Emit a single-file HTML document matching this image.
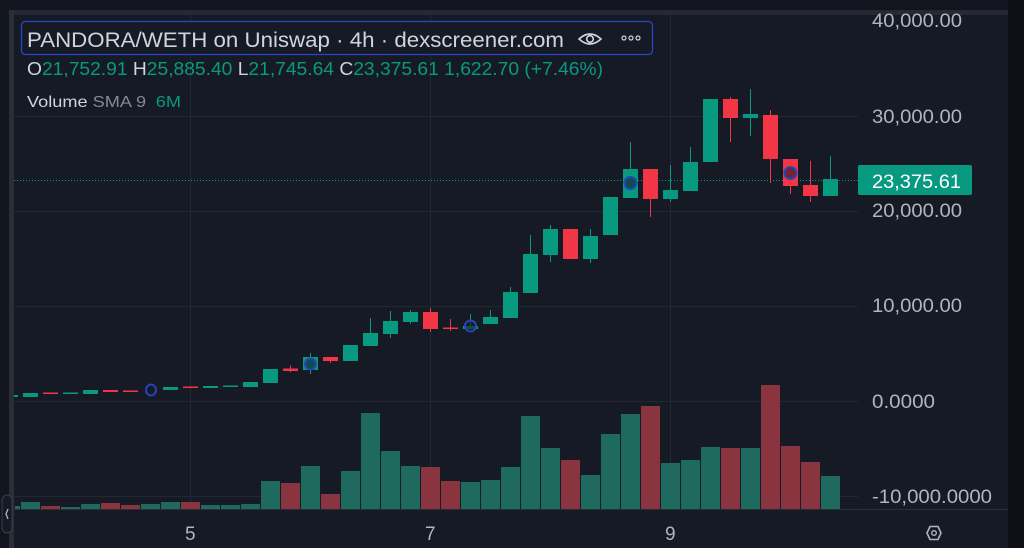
<!DOCTYPE html>
<html><head><meta charset="utf-8"><style>
body{margin:0;background:#161a25;width:1024px;height:548px;overflow:hidden;font-family:"Liberation Sans",sans-serif}
</style></head><body>
<svg width="1024" height="548" xmlns="http://www.w3.org/2000/svg" style="position:absolute;left:0;top:0">
<rect width="1024" height="548" fill="#161a25"/>
<rect x="0" y="0" width="1024" height="10" fill="#12151d"/>
<rect x="14" y="10" width="994" height="5" fill="#252935"/>
<rect x="0" y="0" width="9" height="548" fill="#12151d"/>
<rect x="9" y="10" width="5" height="538" fill="#2a2e39"/>
<rect x="1008" y="0" width="16" height="548" fill="#0e1016"/>
<g stroke="#232733" stroke-width="1">
<line x1="14" y1="116.5" x2="858" y2="116.5"/><line x1="14" y1="211.5" x2="858" y2="211.5"/>
<line x1="14" y1="306.5" x2="858" y2="306.5"/><line x1="14" y1="401.5" x2="858" y2="401.5"/>
<line x1="14" y1="496.5" x2="858" y2="496.5"/>
<line x1="190.5" y1="15" x2="190.5" y2="510"/><line x1="430.5" y1="15" x2="430.5" y2="510"/><line x1="670.5" y1="15" x2="670.5" y2="510"/>
</g>
<line x1="14" y1="509.5" x2="1008" y2="509.5" stroke="#2a2e39"/>
<!-- volume -->
<g fill="#1e6a5e">
<rect x="15" y="506" width="5" height="3"/>
<rect x="21" y="502" width="19" height="7"/><rect x="61" y="507" width="19" height="2"/><rect x="81" y="504" width="19" height="5"/>
<rect x="141" y="504" width="19" height="5"/><rect x="161" y="502" width="19" height="7"/><rect x="201" y="505" width="19" height="4"/>
<rect x="221" y="505" width="19" height="4"/><rect x="241" y="504" width="19" height="5"/><rect x="261" y="481" width="19" height="28"/>
<rect x="301" y="466" width="19" height="43"/><rect x="341" y="471" width="19" height="38"/><rect x="361" y="413" width="19" height="96"/>
<rect x="381" y="451" width="19" height="58"/><rect x="401" y="466" width="19" height="43"/><rect x="461" y="482" width="19" height="27"/>
<rect x="481" y="480" width="19" height="29"/><rect x="501" y="467" width="19" height="42"/><rect x="521" y="416" width="19" height="93"/>
<rect x="541" y="448" width="19" height="61"/><rect x="581" y="475" width="19" height="34"/><rect x="601" y="434" width="19" height="75"/>
<rect x="621" y="414" width="19" height="95"/><rect x="661" y="463" width="19" height="46"/><rect x="681" y="460" width="19" height="49"/>
<rect x="701" y="447" width="19" height="62"/><rect x="741" y="448" width="19" height="61"/><rect x="821" y="476" width="19" height="33"/>
</g>
<g fill="#8a3440">
<rect x="41" y="506" width="19" height="3"/><rect x="101" y="503" width="19" height="6"/><rect x="121" y="505" width="19" height="4"/>
<rect x="181" y="502" width="19" height="7"/><rect x="281" y="483" width="19" height="26"/><rect x="321" y="494" width="19" height="15"/>
<rect x="421" y="467" width="19" height="42"/><rect x="441" y="481" width="19" height="28"/><rect x="561" y="460" width="19" height="49"/>
<rect x="641" y="406" width="19" height="103"/><rect x="721" y="448" width="19" height="61"/><rect x="761" y="385" width="19" height="124"/>
<rect x="781" y="446" width="19" height="63"/><rect x="801" y="462" width="19" height="47"/>
</g>
<!-- price line -->
<line x1="14" y1="180.5" x2="858" y2="180.5" stroke="#089981" stroke-width="1" stroke-dasharray="1,2"/>
<!-- candles green -->
<g fill="#089981" stroke="#089981">
<rect x="14" y="395" width="4" height="2" stroke="none"/>
<rect x="23" y="393" width="15" height="4" stroke="none"/>
<rect x="63" y="392.5" width="15" height="1.5" stroke="none"/>
<rect x="83" y="390" width="15" height="4" stroke="none"/>
<rect x="163" y="387" width="15" height="3" stroke="none"/>
<rect x="203" y="386" width="15" height="2" stroke="none"/>
<rect x="223" y="385.5" width="15" height="1.5" stroke="none"/>
<rect x="243" y="382" width="15" height="5" stroke="none"/>
<rect x="263" y="369" width="15" height="14" stroke="none"/>
<line x1="310.5" y1="353" x2="310.5" y2="374"/><rect x="303" y="357" width="15" height="13" stroke="none"/>
<rect x="343" y="345" width="15" height="16" stroke="none"/>
<line x1="370.5" y1="318" x2="370.5" y2="346"/><rect x="363" y="333" width="15" height="13" stroke="none"/>
<line x1="390.5" y1="311" x2="390.5" y2="338"/><rect x="383" y="321" width="15" height="13" stroke="none"/>
<line x1="410.5" y1="310" x2="410.5" y2="324"/><rect x="403" y="312" width="15" height="10" stroke="none"/>
<line x1="470.5" y1="314" x2="470.5" y2="330"/><rect x="463" y="326" width="15" height="3" stroke="none"/>
<line x1="490.5" y1="310" x2="490.5" y2="318"/><rect x="483" y="317" width="15" height="7" stroke="none"/>
<line x1="510.5" y1="287" x2="510.5" y2="293"/><rect x="503" y="292" width="15" height="26" stroke="none"/>
<line x1="530.5" y1="235" x2="530.5" y2="255"/><rect x="523" y="254" width="15" height="39" stroke="none"/>
<line x1="550.5" y1="225" x2="550.5" y2="262"/><rect x="543" y="229" width="15" height="26" stroke="none"/>
<line x1="590.5" y1="229" x2="590.5" y2="263"/><rect x="583" y="236" width="15" height="23" stroke="none"/>
<rect x="603" y="197" width="15" height="38" stroke="none"/>
<line x1="630.5" y1="142" x2="630.5" y2="198"/><rect x="623" y="169" width="15" height="29" stroke="none"/>
<line x1="670.5" y1="165" x2="670.5" y2="202"/><rect x="663" y="190" width="15" height="9" stroke="none"/>
<line x1="690.5" y1="147" x2="690.5" y2="191"/><rect x="683" y="162" width="15" height="29" stroke="none"/>
<rect x="703" y="99" width="15" height="63" stroke="none"/>
<line x1="750.5" y1="89" x2="750.5" y2="136"/><rect x="743" y="114" width="15" height="4" stroke="none"/>
<line x1="830.5" y1="156" x2="830.5" y2="180"/><rect x="823" y="179" width="15" height="17" stroke="none"/>
</g>
<g fill="#f23645" stroke="#f23645">
<rect x="43" y="392.5" width="15" height="1.5" stroke="none"/>
<rect x="103" y="390" width="15" height="2" stroke="none"/>
<rect x="123" y="390.5" width="15" height="1.5" stroke="none"/>
<rect x="183" y="386.5" width="15" height="1.5" stroke="none"/>
<line x1="290.5" y1="365.5" x2="290.5" y2="372"/><rect x="283" y="368.5" width="15" height="2.5" stroke="none"/>
<line x1="330.5" y1="357" x2="330.5" y2="363"/><rect x="323" y="357" width="15" height="4" stroke="none"/>
<line x1="430.5" y1="308" x2="430.5" y2="332"/><rect x="423" y="312" width="15" height="17" stroke="none"/>
<line x1="450.5" y1="319" x2="450.5" y2="331"/><rect x="443" y="327.5" width="15" height="1.5" stroke="none"/>
<rect x="563" y="229" width="15" height="30" stroke="none"/>
<line x1="650.5" y1="169" x2="650.5" y2="217"/><rect x="643" y="169" width="15" height="30" stroke="none"/>
<line x1="730.5" y1="97" x2="730.5" y2="142"/><rect x="723" y="99" width="15" height="19" stroke="none"/>
<line x1="770.5" y1="110" x2="770.5" y2="183"/><rect x="763" y="115" width="15" height="44" stroke="none"/>
<line x1="790.5" y1="159" x2="790.5" y2="194"/><rect x="783" y="159" width="15" height="27" stroke="none"/>
<line x1="810.5" y1="161" x2="810.5" y2="202"/><rect x="803" y="185" width="15" height="11" stroke="none"/>
</g>
<g fill="#161a25" fill-opacity="0.6" stroke="#2444b8" stroke-width="2">
<ellipse cx="151" cy="390" rx="5" ry="5.5"/>
<circle cx="310.5" cy="364" r="5.5"/>
<circle cx="470.5" cy="326" r="5.5"/>
<circle cx="630.5" cy="183" r="6"/>
<circle cx="790.5" cy="173" r="6"/>
</g>
<!-- price label -->
<rect x="858" y="165" width="114" height="30" rx="2" fill="#089981"/>
<text x="872" y="188" fill="#fff" font-size="19" textLength="89" lengthAdjust="spacingAndGlyphs">23,375.61</text>
<g fill="#b2b5be" font-size="19">
<text x="872" y="27" textLength="90" lengthAdjust="spacingAndGlyphs">40,000.00</text>
<text x="872" y="123" textLength="90" lengthAdjust="spacingAndGlyphs">30,000.00</text>
<text x="872" y="217" textLength="90" lengthAdjust="spacingAndGlyphs">20,000.00</text>
<text x="872" y="312" textLength="90" lengthAdjust="spacingAndGlyphs">10,000.00</text>
<text x="872" y="408" textLength="63" lengthAdjust="spacingAndGlyphs">0.0000</text>
<text x="872" y="503" textLength="120" lengthAdjust="spacingAndGlyphs">-10,000.0000</text>
<text x="185" y="540">5</text><text x="425" y="540">7</text><text x="665" y="540">9</text>
</g>
<polygon points="927,533 930,526.5 938,526.5 941,533 938,539.5 930,539.5" fill="none" stroke="#b2b5be" stroke-width="1.6"/>
<circle cx="934" cy="533" r="2.3" fill="none" stroke="#b2b5be" stroke-width="1.4"/>
<!-- collapse button -->
<rect x="2" y="495" width="10" height="38" rx="5" fill="#161a25" stroke="#3a3e4a"/>
<path d="M8 509 L6 514 L8 519" fill="none" stroke="#b2b5be" stroke-width="1.3"/>
<!-- legend -->
<rect x="21.5" y="21.5" width="631" height="33" rx="4" fill="#161a25" stroke="#2a46c8" stroke-width="1.3"/>
<text x="27" y="47" fill="#d1d4dc" font-size="21.5" textLength="537" lengthAdjust="spacingAndGlyphs">PANDORA/WETH on Uniswap · 4h · dexscreener.com</text>
<path d="M579 39 Q590 29 601 39 Q590 49 579 39Z" fill="none" stroke="#d1d4dc" stroke-width="1.6"/>
<circle cx="590" cy="39" r="3.3" fill="none" stroke="#d1d4dc" stroke-width="1.6"/>
<g fill="none" stroke="#d1d4dc" stroke-width="1.2"><circle cx="624" cy="38" r="2"/><circle cx="631" cy="38" r="2"/><circle cx="638" cy="38" r="2"/></g>
<text x="27" y="75" font-size="18" fill="#089981" textLength="576" lengthAdjust="spacingAndGlyphs"><tspan fill="#d1d4dc">O</tspan>21,752.91 <tspan fill="#d1d4dc">H</tspan>25,885.40 <tspan fill="#d1d4dc">L</tspan>21,745.64 <tspan fill="#d1d4dc">C</tspan>23,375.61 1,622.70 (+7.46%)</text>
<text x="27" y="107" font-size="16" fill="#d1d4dc" textLength="154" lengthAdjust="spacingAndGlyphs">Volume <tspan fill="#868993">SMA 9</tspan> <tspan fill="#089981" dx="4">6M</tspan></text>
</svg>
</body></html>
